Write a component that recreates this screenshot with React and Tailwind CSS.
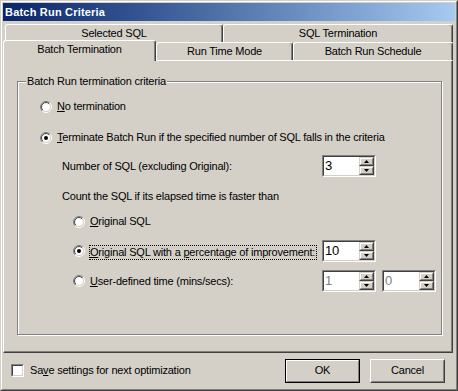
import React from 'react';

const Radio = ({ checked }) => (
    <svg width="12" height="12" viewBox="0 0 12 12" className="shrink-0">
        <defs>
            <linearGradient id="radio-outer" x1="0" y1="0" x2="1" y2="1">
                <stop offset="0.5" stopColor="#808080" />
                <stop offset="0.5" stopColor="#ffffff" />
            </linearGradient>
            <linearGradient id="radio-inner" x1="0" y1="0" x2="1" y2="1">
                <stop offset="0.5" stopColor="#404040" />
                <stop offset="0.5" stopColor="#d4d0c8" />
            </linearGradient>
        </defs>
        <circle cx="6" cy="6" r="5.5" fill="none" stroke="url(#radio-outer)" />
        <circle cx="6" cy="6" r="4.5" fill="#ffffff" stroke="url(#radio-inner)" />
        {checked && <circle cx="6" cy="6" r="2" fill="#000000" />}
    </svg>
);

const Arrow = ({ up }) => (
    <svg width="5" height="3" viewBox="0 0 5 3">
        <polygon points={up ? "2.5,0 5,3 0,3" : "0,0 5,0 2.5,3"} fill="#000000" />
    </svg>
);

const SpinButton = ({ up }) => (
    <div className="h-[9px] border border-t-[#d4d0c8] border-l-[#d4d0c8] border-r-[#404040] border-b-[#404040] bg-[#d4d0c8]">
        <div className="h-full border border-t-white border-l-white border-r-[#808080] border-b-[#808080] flex items-center justify-center">
            <Arrow up={up} />
        </div>
    </div>
);

const Spin = ({ value, disabled }) => (
    <div className="w-[54px] h-[22px] shrink-0 border border-t-[#808080] border-l-[#808080] border-r-white border-b-white">
        <div className="h-full border border-t-[#404040] border-l-[#404040] border-r-[#d4d0c8] border-b-[#d4d0c8] bg-white flex">
            <div className={"flex-1 pl-[1px] text-[13px] leading-[18px] tracking-[-0.3px] " + (disabled ? "text-[#808080]" : "text-black")}>
                {value}
            </div>
            <div className="w-[15px] flex flex-col">
                <SpinButton up />
                <SpinButton />
            </div>
        </div>
    </div>
);

const Tab = ({ label, className }) => (
    <div className={"h-full flex justify-center pt-[2px] border-l border-t border-r border-l-white border-t-white border-r-[#404040] rounded-t-[3px] shadow-[inset_-1px_0_0_#808080] bg-[#d4d0c8] " + className}>
        <span className="leading-[13px]">{label}</span>
    </div>
);

export default function App() {
    return (
        <div className="w-[458px] h-[391px] bg-[#d4d0c8] font-['Liberation_Sans',Arial,sans-serif] text-[11px] tracking-[-0.2px] text-black select-none">
            <div className="h-full border border-t-[#d4d0c8] border-l-[#d4d0c8] border-r-[#404040] border-b-[#404040]">
                <div className="h-full border border-t-white border-l-white border-r-[#808080] border-b-[#808080] p-[1px] flex flex-col">
                    {/* Title bar */}
                    <div className="h-[18px] shrink-0 bg-linear-to-r from-[#0a246a] to-[#a6caf0] flex items-center pl-[2px]">
                        <span className="text-white font-bold tracking-[0.2px] leading-[13px]">Batch Run Criteria</span>
                    </div>

                    {/* Tab rows */}
                    <div className="mt-[3px] h-[18px] flex pl-[2px]">
                        <Tab label="Selected SQL" className="w-[218px]" />
                        <Tab label="SQL Termination" className="w-[230px]" />
                    </div>
                    <div className="h-[18px] flex items-start">
                        <div className="relative z-10 -mt-[2px] w-[153px] h-[21px] flex justify-center pt-[2px] border-l border-t border-r border-l-white border-t-white border-r-[#404040] rounded-t-[3px] shadow-[inset_-1px_0_0_#808080] bg-[#d4d0c8]">
                            <span className="leading-[13px]">Batch Termination</span>
                        </div>
                        <Tab label="Run Time Mode" className="w-[137px]" />
                        <Tab label="Batch Run Schedule" className="w-[160px]" />
                    </div>

                    {/* Panel */}
                    <div className="w-[450px] h-[293px] shrink-0 border-l border-t border-r border-b border-l-white border-t-white border-r-[#404040] border-b-[#404040] shadow-[inset_-1px_-1px_0_#808080] pt-[20px] pl-[13px]">
                        <div className="relative w-[425px] h-[254px] border border-[#808080] shadow-[inset_1px_1px_0_#ffffff,1px_1px_0_#ffffff] flex flex-col">
                            <span className="absolute left-[8px] -top-[7px] px-[1px] bg-[#d4d0c8] leading-[13px]">Batch Run termination criteria</span>

                            <div className="mt-[18px] ml-[22px] h-[13px] flex items-center gap-[4px]">
                                <Radio />
                                <span className="border border-transparent leading-[13px]"><u>N</u>o termination</span>
                            </div>

                            <div className="mt-[18px] ml-[22px] h-[13px] flex items-center gap-[4px]">
                                <Radio checked />
                                <span className="border border-transparent leading-[13px]"><u>T</u>erminate Batch Run if the specified number of SQL falls in the criteria</span>
                            </div>

                            <div className="mt-[11px] ml-[44px] h-[22px] flex items-center">
                                <span className="w-[260px] leading-[13px]">Number of SQL (excluding Original):</span>
                                <Spin value="3" />
                            </div>

                            <div className="mt-[13px] ml-[44px] h-[13px] flex items-center">
                                <span className="leading-[13px]">Count the SQL if its elapsed time is faster than</span>
                            </div>

                            <div className="mt-[12px] ml-[55px] h-[13px] flex items-center gap-[4px]">
                                <Radio />
                                <span className="border border-transparent leading-[13px]"><u>O</u>riginal SQL</span>
                            </div>

                            <div className="mt-[12px] ml-[55px] h-[22px] flex items-center">
                                <Radio checked />
                                <span className="ml-[4px] w-[228px] h-[15px] mt-[2px] border border-dotted border-black leading-[13px]">
                                    <u>O</u>riginal SQL with a <u>p</u>ercentage of improvement:
                                </span>
                                <div className="ml-[5px]">
                                    <Spin value="10" />
                                </div>
                            </div>

                            <div className="mt-[8px] ml-[55px] h-[22px] flex items-center">
                                <Radio />
                                <span className="ml-[4px] w-[228px] border border-transparent leading-[13px]">
                                    <u>U</u>ser-defined time (mins/secs):
                                </span>
                                <div className="ml-[5px]">
                                    <Spin value="1" disabled />
                                </div>
                                <div className="ml-[6px]">
                                    <Spin value="0" disabled />
                                </div>
                            </div>
                        </div>
                    </div>

                    {/* Bottom bar */}
                    <div className="flex-1 flex items-center pl-[8px] pr-[10px]">
                        <div className="w-[13px] h-[13px] border border-t-[#808080] border-l-[#808080] border-r-white border-b-white">
                            <div className="h-full border border-t-[#404040] border-l-[#404040] border-r-[#d4d0c8] border-b-[#d4d0c8] bg-white" />
                        </div>
                        <span className="ml-[6px] leading-[13px]">Sa<u>v</u>e settings for next optimization</span>

                        <div className="ml-auto w-[75px] h-[24px] border border-black">
                            <div className="h-full border border-t-white border-l-white border-r-[#808080] border-b-[#808080] flex items-center justify-center">
                                <span className="leading-[13px]">OK</span>
                            </div>
                        </div>
                        <div className="ml-[10px] w-[75px] h-[24px] border border-t-white border-l-white border-r-[#404040] border-b-[#404040]">
                            <div className="h-full border border-t-[#d4d0c8] border-l-[#d4d0c8] border-r-[#808080] border-b-[#808080] flex items-center justify-center">
                                <span className="leading-[13px]">Cancel</span>
                            </div>
                        </div>
                    </div>
                </div>
            </div>
        </div>
    );
}
